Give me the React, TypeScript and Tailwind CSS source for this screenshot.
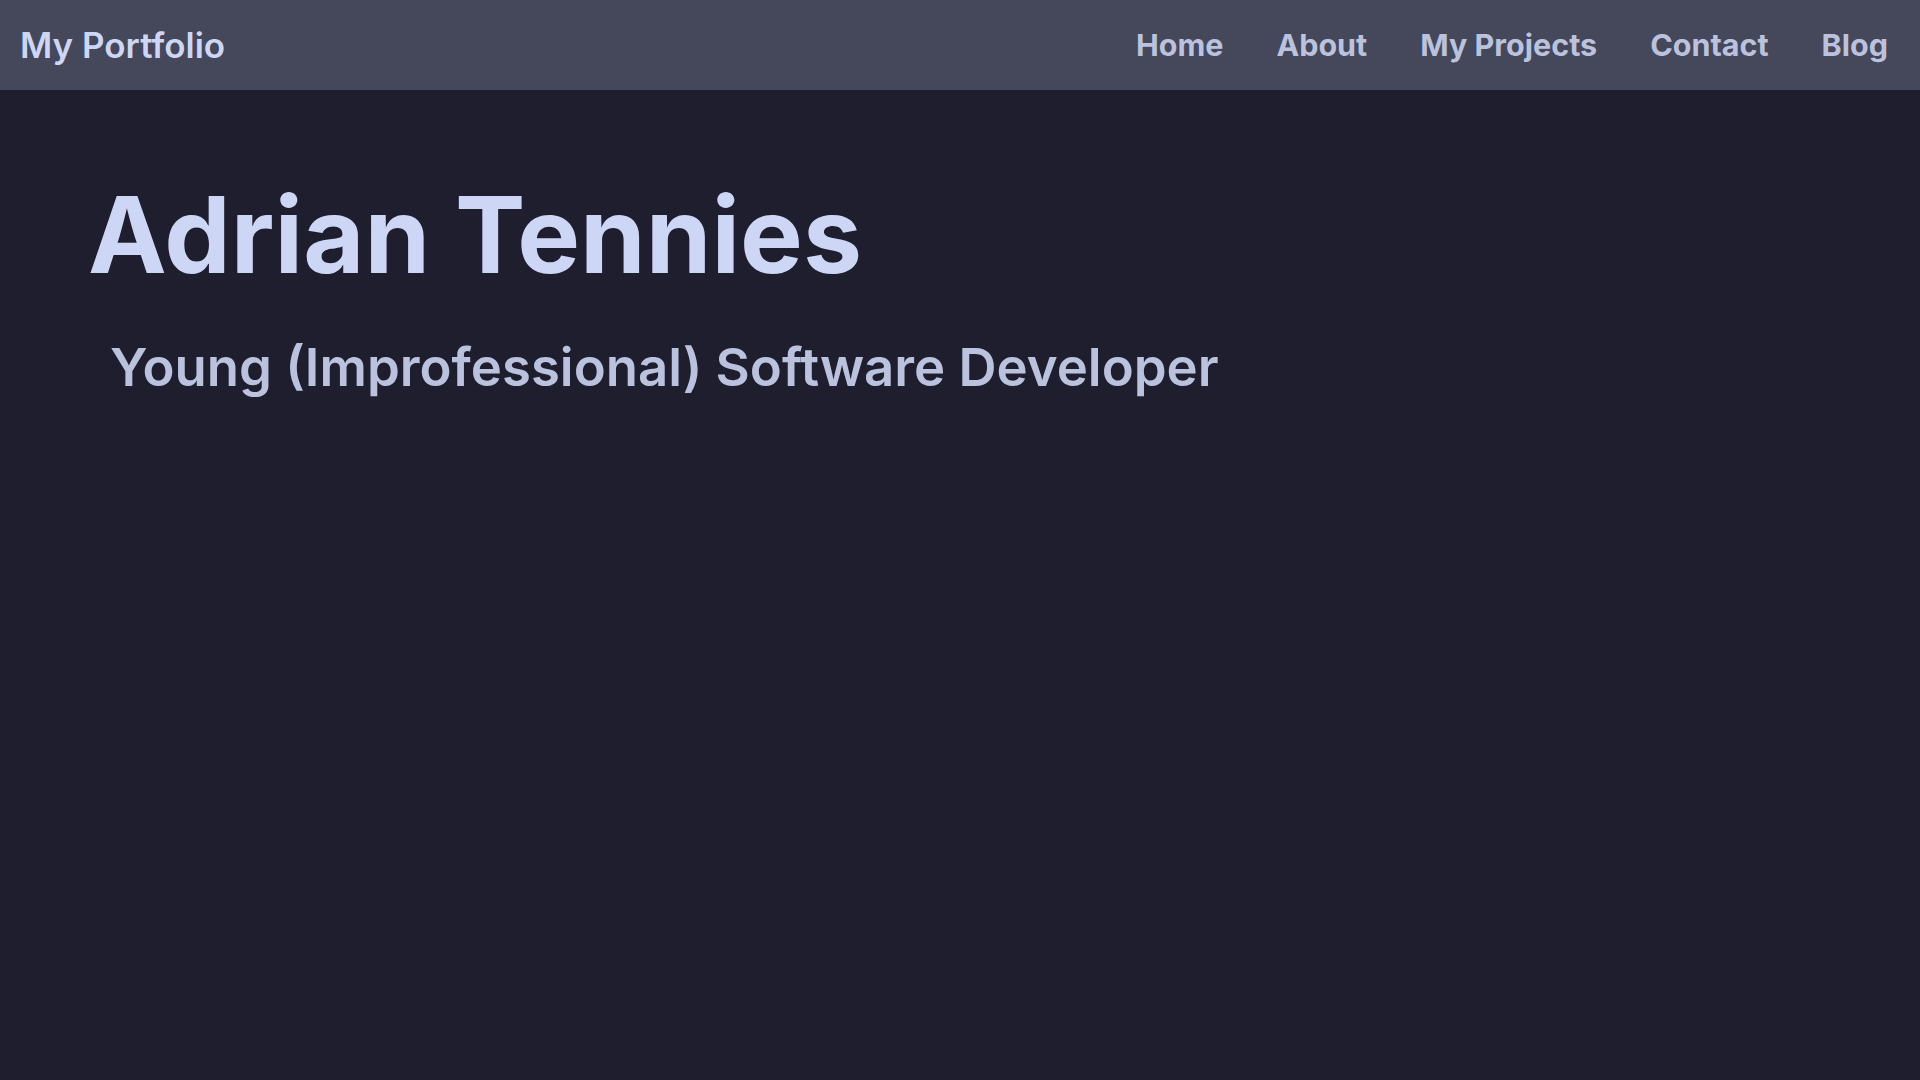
export default function App() {
  const links = ['Home', 'About', 'My Projects', 'Contact', 'Blog'];

  return (
    <div className="min-h-screen bg-[#1e1e2e] font-['Inter','Noto_Sans',sans-serif]">
      <nav className="flex h-[90px] items-center justify-between bg-[#45475a] pl-5 pr-8">
        <a className="text-[35px] font-semibold text-[#cdd6f4]">My Portfolio</a>
        <ul className="flex items-center gap-[53px]">
          {links.map((link) => (
            <li key={link} className="text-[30.5px] font-bold text-[#bac2de]">
              {link}
            </li>
          ))}
        </ul>
      </nav>

      <header className="px-[88px] pt-[92px]">
        <h1 className="text-[105.5px] font-bold leading-none text-[#cdd6f4]">Adrian Tennies</h1>
        <h2 className="mt-[53px] pl-[22px] text-[52.7px] font-semibold leading-none text-[#bac2de]">
          Young (Improfessional) Software Developer
        </h2>
      </header>
    </div>
  );
}
